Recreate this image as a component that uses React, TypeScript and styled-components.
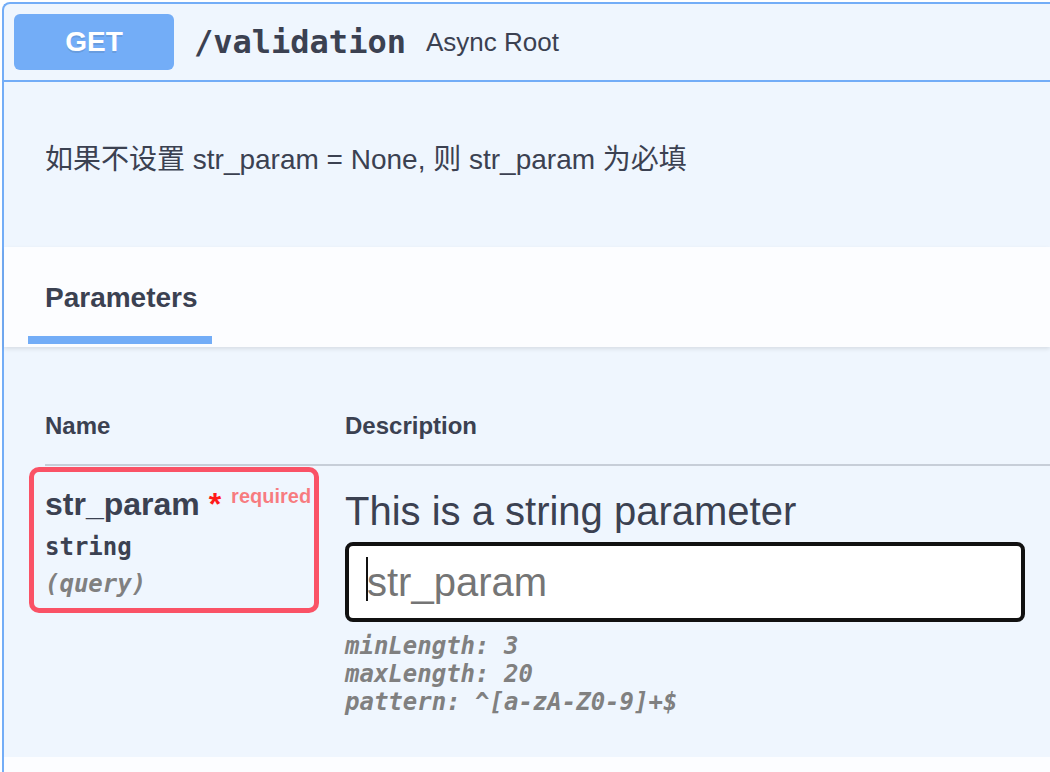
import React from "react";
import styled, { createGlobalStyle } from "styled-components";

const SANS = `"Liberation Sans", "Noto Sans CJK SC", Arial, sans-serif`;
const MONO = `"DejaVu Sans Mono", "Liberation Mono", monospace`;
const BLUE = "#73adf7";
const INK = "#3b4151";

const Global = createGlobalStyle`
  html, body { margin: 0; padding: 0; background: #fff; overflow: hidden; }
  body { font-family: ${SANS}; color: ${INK}; }
  * { box-sizing: border-box; }
`;

const Opblock = styled.section`
  margin: 2px 0 0 2px;
  border: 2px solid ${BLUE};
  border-right: none;
  border-bottom: none;
  border-radius: 8px 0 0 0;
  background: #eff6fe;
`;

const Summary = styled.div`
  display: flex;
  align-items: center;
  padding: 10px;
  border-bottom: 2px solid ${BLUE};
`;

const Method = styled.span`
  display: flex;
  align-items: center;
  justify-content: center;
  min-width: 160px;
  height: 56px;
  border-radius: 6px;
  background: ${BLUE};
  color: #fff;
  font: 700 28px ${SANS};
  text-shadow: 0 2px 0 rgba(0, 0, 0, 0.1);
`;

const Path = styled.span`
  padding: 0 20px;
  font: 700 32px ${MONO};
  color: ${INK};
`;

const SummaryDesc = styled.span`
  font: 400 26px ${SANS};
  color: ${INK};
`;

const Description = styled.div`
  padding: 60px 41px 69px;
  font: 400 28px/36px ${SANS};
  color: ${INK};
`;

const SectionHeader = styled.div`
  position: relative;
  z-index: 1;
  display: flex;
  align-items: flex-end;
  height: 100px;
  padding-left: 24px;
  background: rgba(255, 255, 255, 0.8);
  box-shadow: 0 2px 4px rgba(0, 0, 0, 0.1);
`;

const TabItem = styled.div`
  padding: 35px 14px 22px 17px;
  margin-bottom: 3px;
  border-bottom: 8px solid ${BLUE};
  font: 700 28px/32px ${SANS};
  color: ${INK};
`;

const TableContainer = styled.div`
  padding: 41px 0 41px 41px;
`;

const ParamTable = styled.div`
  display: grid;
  grid-template-columns: 300px 1fr;
`;

const HeadCell = styled.div`
  padding: 24px 0;
  border-bottom: 2px solid rgba(59, 65, 81, 0.22);
  font: 700 24px/28px ${SANS};
  color: ${INK};
`;

const NameCell = styled.div`
  position: relative;
  padding-top: 20px;
`;

const Highlight = styled.div`
  position: absolute;
  top: 1px;
  left: -16px;
  width: 290px;
  height: 146px;
  border: 5px solid #fa5266;
  border-radius: 10px;
  pointer-events: none;
`;

const ParamName = styled.div`
  font: 700 32px/37px ${SANS};
  color: ${INK};
  white-space: nowrap;
`;

const Star = styled.span`
  color: #ff1a1a;
`;

const RequiredTag = styled.span`
  padding: 0 10px;
  font-size: 20px;
  line-height: 1;
  vertical-align: 12px;
  color: rgba(255, 0, 0, 0.5);
`;

const ParamType = styled.div`
  padding: 10px 0 9px;
  font: 700 24px/28px ${MONO};
  color: ${INK};
`;

const ParamIn = styled.div`
  font: italic 600 24px/28px ${MONO};
  color: #808080;
`;

const DescCell = styled.div`
  padding-top: 20px;
`;

const DescText = styled.p`
  margin: 0 0 6px;
  font: 400 40px/50px ${SANS};
  color: ${INK};
`;

const InputWrap = styled.div`
  position: relative;
  width: 680px;
`;

const TextInput = styled.input`
  display: block;
  width: 680px;
  height: 80px;
  padding: 0 18px;
  border: 4px solid #111;
  border-radius: 8px;
  background: #fff;
  font: 400 40px ${SANS};
  color: ${INK};
  outline: none;
  caret-color: transparent;
  &::placeholder { color: #757575; }
`;

const Caret = styled.span`
  position: absolute;
  left: 21px;
  top: 15px;
  width: 2px;
  height: 44px;
  background: #111;
`;

const Constraints = styled.div`
  margin-top: 10px;
`;

const Constraint = styled.div`
  font: italic 600 24px/28px ${MONO};
  color: #808080;
  white-space: pre;
`;

const ResponsesHeader = styled.div`
  height: 15px;
  background: rgba(255, 255, 255, 0.8);
`;

const constraints = ["minLength: 3", "maxLength: 20", "pattern: ^[a-zA-Z0-9]+$"];

export default function App() {
  return (
    <>
      <Global />
      <Opblock>
        <Summary>
          <Method>GET</Method>
          <Path>/validation</Path>
          <SummaryDesc>Async Root</SummaryDesc>
        </Summary>
        <Description>如果不设置 str_param = None, 则 str_param 为必填</Description>
        <SectionHeader>
          <TabItem>Parameters</TabItem>
        </SectionHeader>
        <TableContainer>
          <ParamTable>
            <HeadCell>Name</HeadCell>
            <HeadCell>Description</HeadCell>
            <NameCell>
              <Highlight />
              <ParamName>
                str_param<Star>&nbsp;*</Star>
                <RequiredTag>required</RequiredTag>
              </ParamName>
              <ParamType>string</ParamType>
              <ParamIn>(query)</ParamIn>
            </NameCell>
            <DescCell>
              <DescText>This is a string parameter</DescText>
              <InputWrap>
                <TextInput type="text" placeholder="str_param" />
                <Caret />
              </InputWrap>
              <Constraints>
                {constraints.map((c) => (
                  <Constraint key={c}>{c}</Constraint>
                ))}
              </Constraints>
            </DescCell>
          </ParamTable>
        </TableContainer>
        <ResponsesHeader />
      </Opblock>
    </>
  );
}
